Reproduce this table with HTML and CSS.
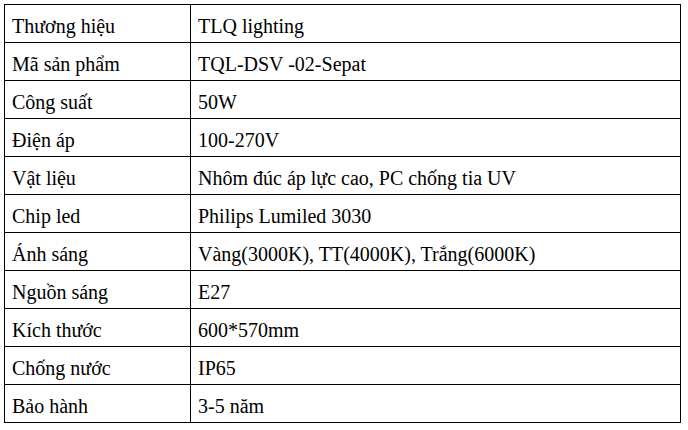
FILE: index.html
```html
<!DOCTYPE html>
<html lang="vi">
<head>
<meta charset="utf-8">
<link rel="stylesheet" href="styles.css">
</head>
<body>
<table class="spec">
<tr><td class="k">Thương hiệu</td><td class="v">TLQ lighting</td></tr>
<tr><td class="k">Mã sản phẩm</td><td class="v">TQL-DSV -02-Sepat</td></tr>
<tr><td class="k">Công suất</td><td class="v">50W</td></tr>
<tr><td class="k">Điện áp</td><td class="v">100-270V</td></tr>
<tr><td class="k">Vật liệu</td><td class="v">Nhôm đúc áp lực cao, PC chống tia UV</td></tr>
<tr><td class="k">Chip led</td><td class="v">Philips Lumiled 3030</td></tr>
<tr><td class="k">Ánh sáng</td><td class="v">Vàng(3000K), TT(4000K), Trắng(6000K)</td></tr>
<tr><td class="k">Nguồn sáng</td><td class="v">E27</td></tr>
<tr><td class="k">Kích thước</td><td class="v">600*570mm</td></tr>
<tr><td class="k">Chống nước</td><td class="v">IP65</td></tr>
<tr><td class="k">Bảo hành</td><td class="v">3-5 năm</td></tr>
</table>
</body>
</html>
```
FILE: styles.css
```css
html, body {
  margin: 0;
  padding: 0;
  background: #fff;
}
body {
  padding: 4px 0 0 4px;
  font-family: "Liberation Serif", "Times New Roman", serif;
  color: #000;
}
.spec {
  border-collapse: collapse;
  width: 677px;
  table-layout: fixed;
}
.spec td {
  border: 1px solid #000;
  height: 38px;
  padding: 5px 7px 0 7px;
  box-sizing: border-box;
  font-size: 20px;
  line-height: 22px;
  vertical-align: middle;
  white-space: nowrap;
}
.spec .k {
  width: 186px;
}
```
